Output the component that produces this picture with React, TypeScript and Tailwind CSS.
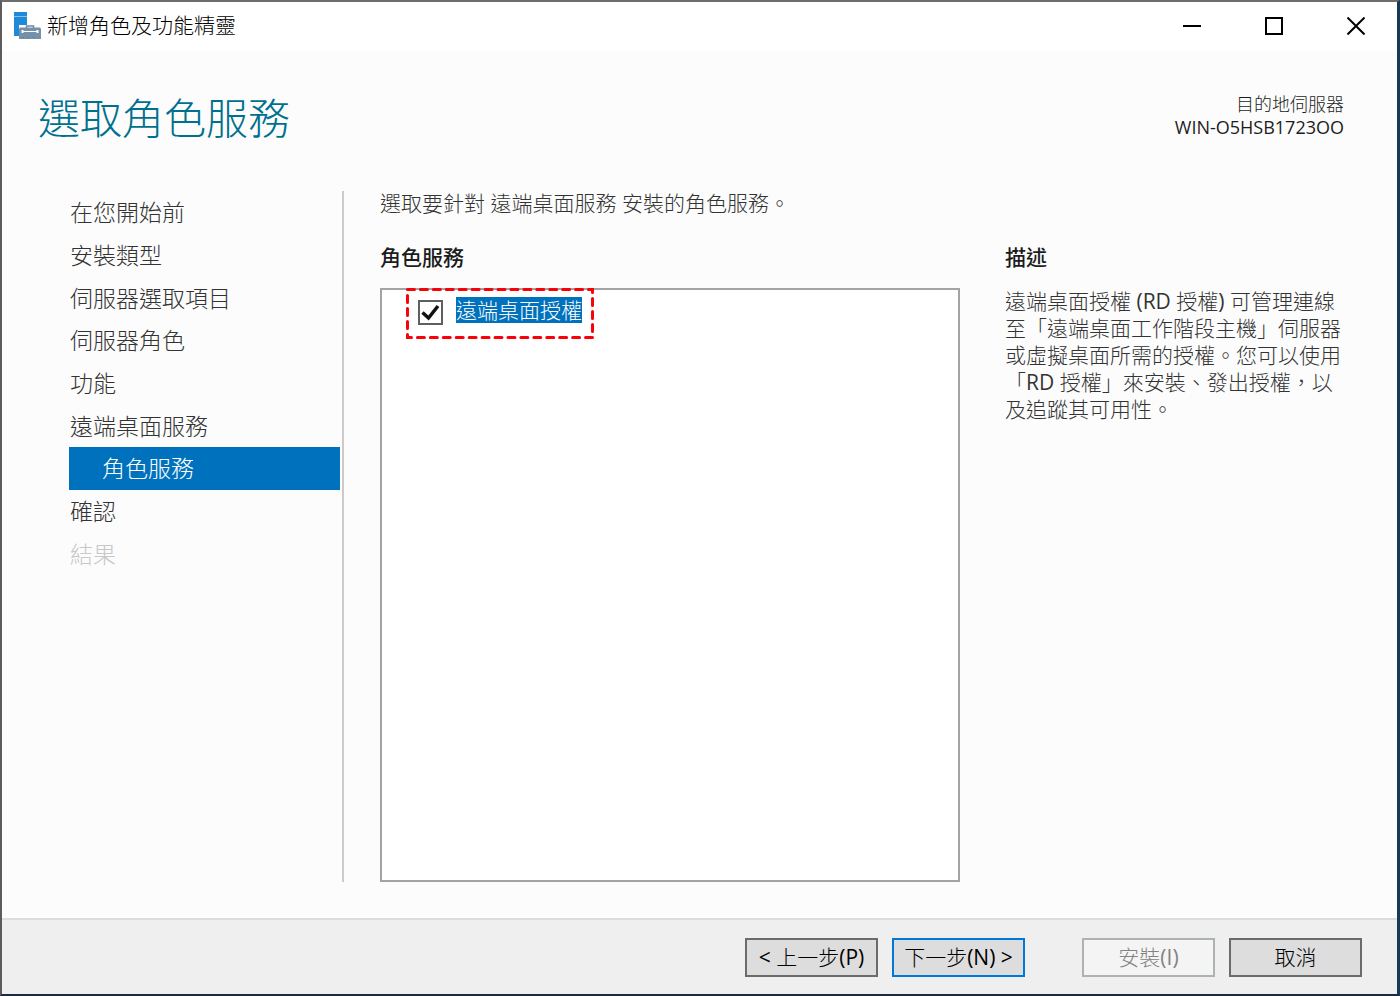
import { useState } from "react";
import type { ReactNode } from "react";

const steps = [
  { label: "在您開始前" },
  { label: "安裝類型" },
  { label: "伺服器選取項目" },
  { label: "伺服器角色" },
  { label: "功能" },
  { label: "遠端桌面服務" },
  { label: "角色服務", current: true },
  { label: "確認" },
  { label: "結果", disabled: true },
];

// Latin runs are set one weight heavier than the light CJK text
function Latin({ children }: { children: ReactNode }) {
  return <span className="font-normal">{children}</span>;
}

function WizardIcon() {
  return (
    <svg width="28" height="28" viewBox="0 0 28 28" aria-hidden="true">
      <path d="M0 0h13v3H0zM0 5h13v8H5v11H0z" fill="#1f8ad9" />
      <path d="M0 4h13v1H0z" fill="#86c1ec" />
      <path d="M0 3h13v1H0z" fill="#1f8ad9" />
      <path d="M12.500 16v-2h7v2" fill="none" stroke="#6f8ba3" strokeWidth="1.500" />
      <path d="M6 15.500h20l1 1V27H5V16.500z" fill="#7591a9" />
      <path d="M8 19.500h16" stroke="#fff" strokeWidth="1" />
      <path d="M8.500 18v3M23.500 18v3" stroke="#fff" strokeWidth="2" />
      <path d="M9 25.500h14" stroke="#5d7a93" strokeWidth="1" strokeDasharray="1 4" />
    </svg>
  );
}

function TitleBar() {
  const button = "flex h-11 w-[82px] items-center justify-center";
  return (
    <header className="flex h-[49px] items-center bg-white pb-0.5 pl-3">
      <WizardIcon />
      <span className="ml-[5px] flex-1 pb-0.5 text-[21px] leading-7 text-black">
        新增角色及功能精靈
      </span>
      <button type="button" aria-label="最小化" className={button}>
        <svg width="18" height="18" viewBox="0 0 18 18">
          <path d="M0 9h18" stroke="#000" strokeWidth="2" />
        </svg>
      </button>
      <button type="button" aria-label="最大化" className={button}>
        <svg width="18" height="18" viewBox="0 0 18 18">
          <path d="M1 1h16v16H1z" fill="none" stroke="#000" strokeWidth="2" />
        </svg>
      </button>
      <button type="button" aria-label="關閉" className={button}>
        <svg width="18" height="18" viewBox="0 0 18 18">
          <path d="M.5.5l17 17M17.500.5l-17 17" stroke="#000" strokeWidth="2" />
        </svg>
      </button>
    </header>
  );
}

function StepList() {
  return (
    <nav className="w-[275px] shrink-0 border-r-2 border-[#cbcbcb] pr-0.5">
      <ul className="grid h-96 grid-rows-9">
        {steps.map((step) => (
          <li key={step.label}>
            <button
              type="button"
              disabled={step.disabled}
              aria-current={step.current ? "step" : undefined}
              className={
                "block h-full w-full text-left text-[23px] leading-[42px] " +
                (step.current
                  ? "bg-[#0071bc] pl-[33px] text-white"
                  : step.disabled
                    ? "pl-px text-[#c8c8c8]"
                    : "pl-px text-[#333333]")
              }
            >
              {step.label}
            </button>
          </li>
        ))}
      </ul>
    </nav>
  );
}

function RoleServices() {
  const [checked, setChecked] = useState(true);

  return (
    <section className="flex flex-1 flex-col">
      <h2 className="text-[21px] leading-7 font-medium text-[#1c1c1c]">角色服務</h2>
      <div className="mt-[17px] flex-1 border-2 border-[#a3a3a3] bg-white pl-6">
        <div className="relative -mt-0.5 inline-flex h-[51px] pt-[9px] pr-3 pl-3">
          <svg className="pointer-events-none absolute inset-0 size-full overflow-visible" viewBox="0 0 189 51" preserveAspectRatio="none">
            <rect
              x="1.500"
              y="1.500"
              width="186"
              height="48"
              fill="none"
              stroke="#fb0007"
              strokeWidth="3"
              strokeLinecap="round"
              strokeDasharray="7 6"
            />
          </svg>
          <label className="flex items-start gap-[13px]">
            <span className="relative mt-[3px] block size-[25px]">
              <input
                type="checkbox"
                checked={checked}
                onChange={(e) => setChecked(e.target.checked)}
                className="block size-[25px] appearance-none border-2 border-[#5f5f5f] bg-white"
              />
              {checked && (
                <svg
                  viewBox="0 0 25 25"
                  className="pointer-events-none absolute inset-0 size-[25px]"
                >
                  <path d="M4.500 12.500l6 5.500L20 6" fill="none" stroke="#111" strokeWidth="3.500" />
                </svg>
              )}
            </span>
            <span className="bg-[#0071bc] text-[21px] leading-[26px] text-white">遠端桌面授權</span>
          </label>
        </div>
      </div>
    </section>
  );
}

function Description() {
  return (
    <section className="w-[342px] shrink-0">
      <h2 className="text-[21px] leading-7 font-medium text-[#1c1c1c]">描述</h2>
      <p className="mt-[17px] text-[21px] leading-[27px] whitespace-nowrap text-[#333333]">
        遠端桌面授權 <Latin>(RD</Latin> 授權<Latin>)</Latin> 可管理連線
        <br />
        至「遠端桌面工作階段主機」伺服器
        <br />
        或虛擬桌面所需的授權。您可以使用
        <br />
        「<Latin>RD</Latin> 授權」來安裝、發出授權，以
        <br />
        及追蹤其可用性。
      </p>
    </section>
  );
}

function Footer() {
  const button = "h-[39px] w-[133px] border-2 text-[21px] leading-7";
  return (
    <footer className="flex h-[76px] items-center justify-end border-t-2 border-[#dcdcdc] bg-[#efefef] pr-[35px]">
      <button type="button" className={button + " border-[#6b6b6b] bg-[#dddddd] text-black"}>
        <Latin>&lt;</Latin> 上一步<Latin>(P)</Latin>
      </button>
      <button type="button" className={button + " ml-3.5 border-[#0078d7] bg-[#dddddd] text-black"}>
        下一步<Latin>(N) &gt;</Latin>
      </button>
      <button
        type="button"
        disabled
        className={button + " ml-[57px] border-[#adb2b5] bg-[#f4f4f4] text-[#838383]"}
      >
        安裝<Latin>(I)</Latin>
      </button>
      <button type="button" className={button + " ml-3.5 border-[#6b6b6b] bg-[#dddddd] text-black"}>
        取消
      </button>
    </footer>
  );
}

export default function App() {
  return (
    <div className="flex min-h-screen flex-col border-2 border-r-3 border-t-[#6d6d6d] border-r-[#173a58] border-b-[#1b2c40] border-l-[#5c5c60] bg-[#fcfcfc] font-['Open_Sans','Noto_Sans_CJK_TC',sans-serif] font-light">
      <TitleBar />
      <div className="flex items-start justify-between pt-[39px] pr-[53px] pb-px pl-9">
        <h1 className="text-[42px] leading-[56px] text-[#00708f]">選取角色服務</h1>
        <p className="pt-[3px] text-right text-[18px] leading-[23px] text-[#1c1c1c]">
          目的地伺服器
          <br />
          <Latin>WIN-O5HSB1723OO</Latin>
        </p>
      </div>
      <main className="flex flex-1 pt-11 pr-[50px] pb-9 pl-[67px]">
        <StepList />
        <div className="ml-9 flex flex-1 flex-col">
          <p className="mb-7 text-[21px] leading-6 text-[#333333]">
            選取要針對 遠端桌面服務 安裝的角色服務。
          </p>
          <div className="flex flex-1 gap-[45px]">
            <RoleServices />
            <Description />
          </div>
        </div>
      </main>
      <Footer />
    </div>
  );
}
